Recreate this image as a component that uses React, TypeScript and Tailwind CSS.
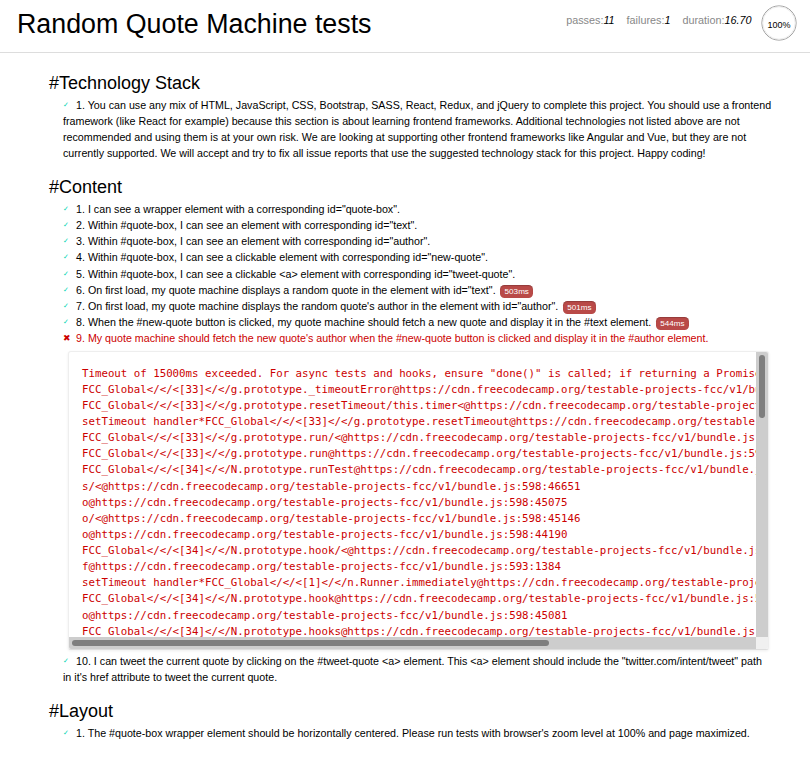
import React from "react";

interface TestCase {
  n: number;
  text: string;
  ms?: number;
  failed?: boolean;
}

interface Suite {
  title: string;
  tests: TestCase[];
}

const U = "@https://cdn.freecodecamp.org/testable-projects-fcc/v1/bundle.js:";

// frames that keep repeating further down the trace
const cycle: [string, string][] = [
  ["FCC_Global</</<[34]</</N.prototype.hookUp", "598:44552"],
  ["FCC_Global</</<[34]</</N.prototype.runTests/next", "598:46263"],
  ["setTimeout handler*FCC_Global</</<[34]</</N.prototype.runSuite/next/</fn", "598:47871"],
  ["s/<", "598:46651"],
  ["o", "598:45075"],
  ["o/<", "598:45146"],
  ["o", "598:44190"],
  ["FCC_Global</</<[34]</</N.prototype.hook/<", "598:44232"],
  ["f", "593:1384"],
  ["setTimeout handler*FCC_Global</</<[1]</</n.Runner.immediately", "593:1356"],
  ["FCC_Global</</<[34]</</N.prototype.hook", "598:43985"],
  ["o", "598:45081"],
  ["FCC_Global</</<[34]</</N.prototype.hooks", "598:44415"],
  ["FCC_Global</</<[34]</</N.prototype.hookDown", "598:44594"],
];

const stack: string[] = [
  'Timeout of 15000ms exceeded. For async tests and hooks, ensure "done()" is called; if returning a Promise, ensure it resolves.',
  "FCC_Global</</<[33]</</g.prototype._timeoutError" + U + "598:42669",
  "FCC_Global</</<[33]</</g.prototype.resetTimeout/this.timer<" + U + "598:42340",
  "setTimeout handler*FCC_Global</</<[33]</</g.prototype.resetTimeout" + U + "598:42289",
  "FCC_Global</</<[33]</</g.prototype.run/<" + U + "598:43380",
  "FCC_Global</</<[33]</</g.prototype.run" + U + "598:43301",
  "FCC_Global</</<[34]</</N.prototype.runTest" + U + "598:46567",
  "s/<" + U + "598:46651",
  "o" + U + "598:45075",
  "o/<" + U + "598:45146",
  "o" + U + "598:44190",
  "FCC_Global</</<[34]</</N.prototype.hook/<" + U + "598:44232",
  "f" + U + "593:1384",
  "setTimeout handler*FCC_Global</</<[1]</</n.Runner.immediately" + U + "593:1356",
  "FCC_Global</</<[34]</</N.prototype.hook" + U + "598:43985",
  "o" + U + "598:45081",
  "FCC_Global</</<[34]</</N.prototype.hooks" + U + "598:44415",
  ...[0, 1, 2, 3].flatMap(() => cycle.map(([fn, pos]) => fn + U + pos)),
];

const suites: Suite[] = [
  {
    title: "#Technology Stack",
    tests: [
      {
        n: 1,
        text: "You can use any mix of HTML, JavaScript, CSS, Bootstrap, SASS, React, Redux, and jQuery to complete this project. You should use a frontend framework (like React for example) because this section is about learning frontend frameworks. Additional technologies not listed above are not recommended and using them is at your own risk. We are looking at supporting other frontend frameworks like Angular and Vue, but they are not currently supported. We will accept and try to fix all issue reports that use the suggested technology stack for this project. Happy coding!",
      },
    ],
  },
  {
    title: "#Content",
    tests: [
      { n: 1, text: 'I can see a wrapper element with a corresponding id="quote-box".' },
      { n: 2, text: 'Within #quote-box, I can see an element with corresponding id="text".' },
      { n: 3, text: 'Within #quote-box, I can see an element with corresponding id="author".' },
      { n: 4, text: 'Within #quote-box, I can see a clickable element with corresponding id="new-quote".' },
      { n: 5, text: 'Within #quote-box, I can see a clickable <a> element with corresponding id="tweet-quote".' },
      { n: 6, text: 'On first load, my quote machine displays a random quote in the element with id="text".', ms: 503 },
      { n: 7, text: 'On first load, my quote machine displays the random quote\'s author in the element with id="author".', ms: 501 },
      { n: 8, text: "When the #new-quote button is clicked, my quote machine should fetch a new quote and display it in the #text element.", ms: 544 },
      { n: 9, text: "My quote machine should fetch the new quote's author when the #new-quote button is clicked and display it in the #author element.", failed: true },
      { n: 10, text: 'I can tweet the current quote by clicking on the #tweet-quote <a> element. This <a> element should include the "twitter.com/intent/tweet" path in it\'s href attribute to tweet the current quote.' },
    ],
  },
  {
    title: "#Layout",
    tests: [
      { n: 1, text: "The #quote-box wrapper element should be horizontally centered. Please run tests with browser's zoom level at 100% and page maximized." },
    ],
  },
];

const ErrorBox: React.FC = () => (
  <div className="mb-[2.5px] ml-[4.5px] mt-[4.5px] grid h-[299px] w-[701px] grid-cols-[1fr_12px] grid-rows-[1fr_12px] overflow-hidden rounded-[3px] border border-[#eee] border-b-[#ddd] bg-white shadow-[0_1px_3px_#eee]">
    <pre className="overflow-hidden pl-[13.5px] pt-[13.5px] font-['DejaVu_Sans_Mono',monospace] text-[10.75px] leading-[1.5] text-[#c00]">
      {stack.join("\n")}
    </pre>
    {/* vertical scrollbar */}
    <div className="bg-[#cdcdcd] px-[3px] pt-[3px]">
      <div className="h-[63px] rounded-full bg-[#7e7e7e]" />
    </div>
    {/* horizontal scrollbar */}
    <div className="bg-[#cdcdcd] py-[3px] pl-[3px]">
      <div className="h-full w-[477px] rounded-full bg-[#7e7e7e]" />
    </div>
    <div className="bg-[#f0f0f0]" />
  </div>
);

const TestRow: React.FC<{ test: TestCase }> = ({ test }) => (
  <li className={test.failed ? "ml-[14px] text-[#c00]" : "ml-[14px] text-black"}>
    <h2 className="text-[10.7px] leading-[16.2px]">
      {test.failed ? (
        <span className="float-left w-[13px] font-['DejaVu_Sans',sans-serif] text-[9px] leading-[16.2px] text-[#c00]">✖</span>
      ) : (
        <span className="float-left w-[13px] font-['DejaVu_Sans',sans-serif] text-[7px] leading-[16.2px] text-[#00d6b2]">✓</span>
      )}
      {test.n}. {test.text}
      {test.ms && (
        <span className="ml-[4.5px] rounded-[4.5px] bg-[#b94a48] px-[4.5px] py-[1.8px] text-[8.1px] leading-none text-white shadow-[inset_0_1px_1px_rgba(0,0,0,0.2)]">
          {test.ms}ms
        </span>
      )}
    </h2>
    {test.failed && <ErrorBox />}
  </li>
);

const App: React.FC = () => {
  return (
    <div className="min-h-[760px] bg-white font-['Liberation_Sans',Arial,sans-serif] text-black">
      {/* Header */}
      <header className="flex h-[53px] items-start justify-between border-b border-[#ddd]">
        <h1 className="pl-[17px] text-[26.8px] leading-[49px]">Random Quote Machine tests</h1>

        <div className="flex items-start pr-[13px]">
          <ul className="mt-[12px] flex gap-[12px] text-[10.8px] leading-[16.2px] text-[#888]">
            <li>
              passes:<em className="text-black">11</em>
            </li>
            <li>
              failures:<em className="text-black">1</em>
            </li>
            <li>
              duration:<em className="text-black">16.70</em>
            </li>
          </ul>
          <svg className="ml-[9.5px] mt-[5px]" width="36" height="36" viewBox="0 0 36 36">
            <circle cx="18" cy="18" r="17.1" fill="none" stroke="#9f9f9f" strokeWidth="1" />
            <circle cx="18" cy="18" r="16.2" fill="none" stroke="#eee" strokeWidth="1" />
            <text x="18" y="23.3" textAnchor="middle" fontSize="9" fontFamily="Liberation Sans, Arial, sans-serif" fill="#000">
              100%
            </text>
          </svg>
        </div>
      </header>

      {/* Report */}
      <main className="pl-[49px] pr-[37px] pt-[4px]">
        {suites.map((suite) => (
          <section key={suite.title}>
            <h1 className="mt-[12.5px] text-[18px] leading-[27px]">{suite.title}</h1>
            <ul>
              {suite.tests.map((test) => (
                <TestRow key={test.n} test={test} />
              ))}
            </ul>
          </section>
        ))}
      </main>
    </div>
  );
};

export default App;
